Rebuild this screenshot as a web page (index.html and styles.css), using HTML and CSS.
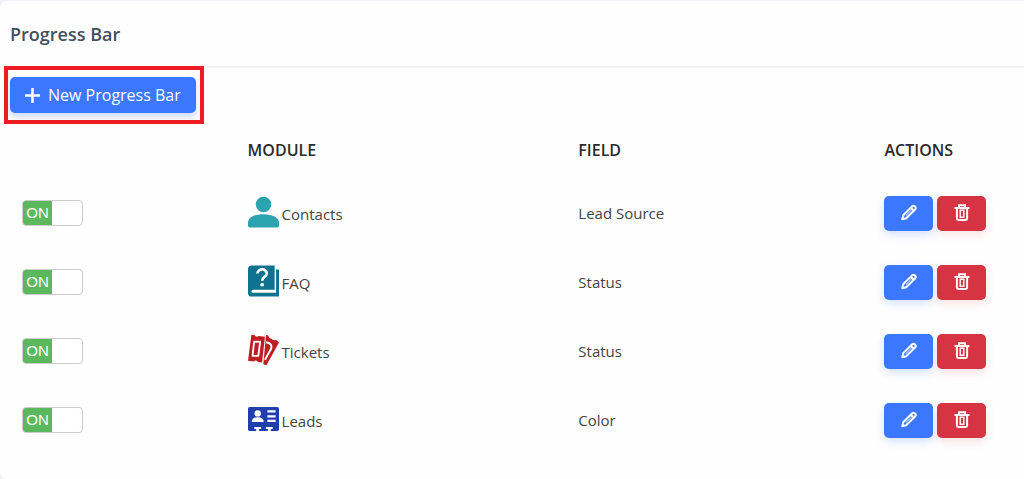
FILE: index.html
```html
<!DOCTYPE html>
<html lang="en">
<head>
<meta charset="utf-8">
<title>Progress Bar</title>
<link rel="stylesheet" href="styles.css">
</head>
<body>
<svg class="sprite" aria-hidden="true">
  <symbol id="pencil" viewBox="0 0 16 16"><g fill="none" stroke="currentColor" stroke-width="2" stroke-linejoin="round"><path d="M1.3 14.7 2.2 10.8 11.3 1.7Q12.4.7 13.6 1.7L14.3 2.4Q15.3 3.6 14.3 4.7L5.2 13.8Z"/><path d="M9.8 3.3 12.7 6.2"/><path d="M4.8 11.2 10.5 5.5" stroke-width=".8"/></g></symbol>
  <symbol id="trash" viewBox="0 0 16 17"><g fill="none" stroke="currentColor" stroke-width="2"><path d="M.5 4H15.5M5 4V1.2H11V4M2.9 4V14.6Q2.9 16 4.3 16H11.7Q13.1 16 13.1 14.6V4"/><path d="M6.2 6.2V13.6M9.8 6.2V13.6M5.500 6.200H10.500M5.500 13.200H10.500" stroke-width="1.4"/></g></symbol>
</svg>
<main class="card">
  <header class="card-header"><h1 class="title">Progress Bar</h1></header>
  <div class="toolbar">
    <div class="highlight">
      <button class="btn btn-new" type="button"><svg class="plus" viewBox="0 0 14 14" aria-hidden="true"><path d="M7 0V14M0 7H14" stroke="currentColor" stroke-width="2.400"/></svg>New Progress Bar</button>
    </div>
  </div>
  <table class="grid">
    <colgroup><col class="col-toggle"><col class="col-module"><col class="col-field"><col class="col-actions"></colgroup>
    <thead><tr><th></th><th>MODULE</th><th>FIELD</th><th>ACTIONS</th></tr></thead>
    <tbody>
      <tr>
        <td><label class="toggle"><input type="checkbox" checked aria-label="Enable Contacts"><span class="on">ON</span></label></td>
        <td class="module-cell"><div class="module"><svg class="icon" viewBox="0 0 32 32" aria-hidden="true"><g fill="#2ca4b0"><circle cx="16" cy="8.3" r="8"/><path d="M0 30V27C0 22 6 18.3 16 18.3S32 22 32 27V30Q32 32 30 32H2Q0 32 0 30Z"/></g></svg><span class="name">Contacts</span></div></td>
        <td>Lead Source</td>
        <td class="action-cell"><div class="actions"><button class="btn btn-edit" type="button" aria-label="Edit"><svg class="glyph"><use href="#pencil"/></svg></button><button class="btn btn-delete" type="button" aria-label="Delete"><svg class="glyph"><use href="#trash"/></svg></button></div></td>
      </tr>
      <tr>
        <td><label class="toggle"><input type="checkbox" checked aria-label="Enable FAQ"><span class="on">ON</span></label></td>
        <td class="module-cell"><div class="module"><svg class="icon" viewBox="0 0 32 32" aria-hidden="true"><path fill="#0f728f" d="M4 0H27.500V25H5.500Q3.500 25 3.500 26.600T5.500 28.200H29V4H32V32H4Q0 32 0 28V4Q0 0 4 0Z"/><path fill="none" stroke="#fff" stroke-width="2.800" d="M9.800 8.200C10 2.800 19.300 2.700 19.300 8C19.300 11.800 14.600 11.500 14.600 15.800"/><circle cx="14.600" cy="19.800" r="1.900" fill="#fff"/></svg><span class="name">FAQ</span></div></td>
        <td>Status</td>
        <td class="action-cell"><div class="actions"><button class="btn btn-edit" type="button" aria-label="Edit"><svg class="glyph"><use href="#pencil"/></svg></button><button class="btn btn-delete" type="button" aria-label="Delete"><svg class="glyph"><use href="#trash"/></svg></button></div></td>
      </tr>
      <tr>
        <td><label class="toggle"><input type="checkbox" checked aria-label="Enable Tickets"><span class="on">ON</span></label></td>
        <td class="module-cell"><div class="module"><svg class="icon" viewBox="0 0 32 32" aria-hidden="true"><g fill="#bd1e22"><path d="M3.500.3 7 .8Q8.500 3.500 11 1.500L17.500 2.200 14.500 29 10.300 28.400Q8 25.800 6 27.900L0 27Z"/><path d="M18.600.6 21 1Q21.500 4.300 24.500 4.300Q26 7 28.700 5.500L32 8.300 19 31.800 15.800 30.800Z"/></g><path fill="none" stroke="#fff" stroke-width="1.900" stroke-linejoin="round" d="M6.300 7.500H12.500L10.700 22H4.700Z"/><path fill="none" stroke="#fff" stroke-width="2" d="M18.600 8Q25.500 9 24 14.500L17.500 26"/></svg><span class="name">Tickets</span></div></td>
        <td>Status</td>
        <td class="action-cell"><div class="actions"><button class="btn btn-edit" type="button" aria-label="Edit"><svg class="glyph"><use href="#pencil"/></svg></button><button class="btn btn-delete" type="button" aria-label="Delete"><svg class="glyph"><use href="#trash"/></svg></button></div></td>
      </tr>
      <tr>
        <td><label class="toggle"><input type="checkbox" checked aria-label="Enable Leads"><span class="on">ON</span></label></td>
        <td class="module-cell"><div class="module"><svg class="icon" viewBox="0 0 32 32" aria-hidden="true"><rect x="0" y="3.500" width="32" height="25" rx="1.800" fill="#203fae"/><g fill="#fff"><circle cx="10" cy="10.200" r="3.300"/><path d="M3.800 19.200C3.800 15.800 6 14.200 10 14.200S16.200 15.800 16.200 19.200Z"/><path d="M20 7H28.500V9.400H20ZM20 12H28.500V14.400H20ZM20 16.800H28.500V19.200H20ZM6.500 24.200H13.500V26.200H11.500V28.500H8.500V26.200H6.500ZM18.500 24.200H25.500V26.200H23.500V28.500H20.500V26.200H18.500Z"/></g></svg><span class="name">Leads</span></div></td>
        <td>Color</td>
        <td class="action-cell"><div class="actions"><button class="btn btn-edit" type="button" aria-label="Edit"><svg class="glyph"><use href="#pencil"/></svg></button><button class="btn btn-delete" type="button" aria-label="Delete"><svg class="glyph"><use href="#trash"/></svg></button></div></td>
      </tr>
    </tbody>
  </table>
</main>
</body>
</html>
```
FILE: styles.css
```css
* { box-sizing: border-box; }
body { margin: 0; padding-top: 1px; background: #f0f0f7; color: #444; font: 15px/20px "Open Sans", "Noto Sans", sans-serif; }
.sprite { display: none; }
.card { min-height: calc(100vh - 1px); background: #fefefe; border-radius: 7px 0 0 7px; }
.card-header { padding: 21px 10px 19px; border-bottom: 2px solid #f3f3f4; }
.title { margin: 0; color: #44505c; font-size: 18px; line-height: 25px; font-weight: 600; }
.toolbar { padding: 9px 10px 8px; }
.highlight { position: relative; width: fit-content; }
.highlight::after { content: ""; position: absolute; inset: -11px -8px -11px -6px; border: 4px solid #ed1c24; pointer-events: none; }
.btn { display: flex; align-items: center; justify-content: center; height: 35px; padding: 0; border: 0; border-radius: 5px; color: #fff; font: inherit; cursor: pointer; }
.btn-new { gap: 8px; height: 36px; padding: 0 15px; background: #3b78ff; font-size: 16px; box-shadow: 0 4px 6px #3b78ff44; }
.plus { width: 15px; height: 15px; }
.grid { width: 100%; table-layout: fixed; border-collapse: collapse; }
.col-toggle { width: 23.200%; }
.col-module { width: 32.300%; }
.col-field { width: 29.900%; }
th { height: 58px; padding: 0 10px; color: #2b2b2b; font-size: 16px; font-weight: 600; text-align: left; }
td { height: 69px; padding: 0 10px 2px; }
td:first-child { padding-left: 22px; }
.module-cell { padding-bottom: 4px; }
.action-cell { padding-bottom: 0; }
.toggle { display: flex; position: relative; width: 61px; height: 26px; overflow: hidden; border: 1px solid #ccc; border-radius: 4px; background: #fff; cursor: pointer; }
.toggle input { position: absolute; inset: 0; width: 100%; height: 100%; margin: 0; opacity: 0; }
.on { width: 29px; background: #5cb85c; color: #fff; font: 15px/24px "Liberation Sans", sans-serif; text-align: center; }
.module { display: flex; align-items: center; gap: 3px; }
.icon { width: 31px; height: 32px; }
.name { padding-top: 4px; }
.actions { display: flex; gap: 4px; }
.btn-edit, .btn-delete { width: 49px; padding-bottom: 2px; }
.btn-edit { background: #3b78ff; box-shadow: 0 4px 8px #3b78ff33; }
.btn-delete { background: #d63343; box-shadow: 0 4px 8px #d6334322; }
.glyph { width: 16px; height: 17px; }
```
